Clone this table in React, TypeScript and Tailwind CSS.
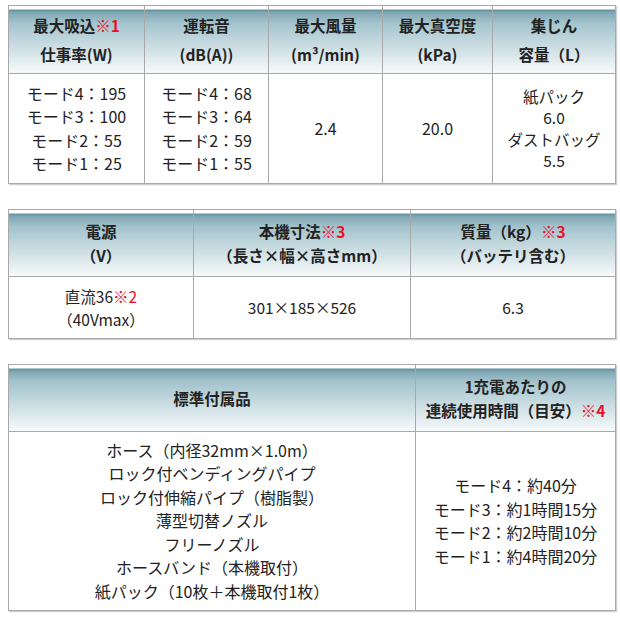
const font = "font-['Noto_Sans_CJK_JP','Noto_Sans',sans-serif]";

const headBg =
  "bg-[linear-gradient(to_bottom,#ffffff_0,#ffffff_3px,#5d8e9b_3px,#7ea7b4_6px,#a3c3cc_16px,#f7fafb_100%)]";
const th = `border border-[#a9a9a9] border-t-0 px-1 text-center align-middle font-bold text-[#222] ${headBg}`;
const td = "border border-[#a9a9a9] px-1 text-center align-middle text-[#222]";

const Note = ({ n }: { n: string }) => (
  <span className="text-[#e8102a]">※{n}</span>
);

const Lines = ({ items }: { items: string[] }) => (
  <>
    {items.map((t) => (
      <div key={t}>{t}</div>
    ))}
  </>
);

export default function App() {
  return (
    <div className={`w-[620px] h-[620px] bg-white pl-2 pt-[5px] ${font}`}>
      {/* 性能 */}
      <table className="w-[607px] table-fixed border-collapse border border-[#a9a9a9] shadow-[1px_1px_1px_#cfcfcf]">
        <colgroup>
          <col className="w-[136px]" />
          <col className="w-[124px]" />
          <col className="w-[114px]" />
          <col className="w-[110px]" />
          <col className="w-[123px]" />
        </colgroup>
        <thead className="text-[15.5px] leading-[29px]">
          <tr className="h-[68px]">
            <th className={th}>
              <div>
                最大吸込<Note n="1" />
              </div>
              <div>仕事率(W)</div>
            </th>
            <th className={th}>
              <div>運転音</div>
              <div>(dB(A))</div>
            </th>
            <th className={th}>
              <div>最大風量</div>
              <div>(m³/min)</div>
            </th>
            <th className={th}>
              <div>最大真空度</div>
              <div>(kPa)</div>
            </th>
            <th className={th}>
              <div>集じん</div>
              <div>容量（L）</div>
            </th>
          </tr>
        </thead>
        <tbody className="text-[16px] leading-[23.5px]">
          <tr className="h-[110px]">
            <td className={td}>
              <Lines items={["モード4：195", "モード3：100", "モード2：55", "モード1：25"]} />
            </td>
            <td className={td}>
              <Lines items={["モード4：68", "モード3：64", "モード2：59", "モード1：55"]} />
            </td>
            <td className={td}>2.4</td>
            <td className={td}>20.0</td>
            <td className={`${td} leading-[21.5px] text-[15.5px]`}>
              <Lines items={["紙パック", "6.0", "ダストバッグ", "5.5"]} />
            </td>
          </tr>
        </tbody>
      </table>

      {/* 電源・寸法 */}
      <table className="mt-[25px] w-[607px] table-fixed border-collapse border border-[#a9a9a9] shadow-[1px_1px_1px_#cfcfcf]">
        <colgroup>
          <col className="w-[185px]" />
          <col className="w-[217px]" />
          <col className="w-[205px]" />
        </colgroup>
        <thead className="text-[15.5px] leading-[24px]">
          <tr className="h-[67px]">
            <th className={th}>
              <div>電源</div>
              <div>（V）</div>
            </th>
            <th className={th}>
              <div>
                本機寸法<Note n="3" />
              </div>
              <div>（長さ×幅×高さmm）</div>
            </th>
            <th className={th}>
              <div>
                質量（kg）<Note n="3" />
              </div>
              <div>（バッテリ含む）</div>
            </th>
          </tr>
        </thead>
        <tbody className="text-[15.5px] leading-[23px]">
          <tr className="h-[62px]">
            <td className={td}>
              <div>
                直流36<Note n="2" />
              </div>
              <div>（40Vmax）</div>
            </td>
            <td className={td}>301×185×526</td>
            <td className={td}>6.3</td>
          </tr>
        </tbody>
      </table>

      {/* 付属品・使用時間 */}
      <table className="mt-[25px] w-[607px] table-fixed border-collapse border border-[#a9a9a9] shadow-[1px_1px_1px_#cfcfcf]">
        <colgroup>
          <col className="w-[407px]" />
          <col className="w-[200px]" />
        </colgroup>
        <thead className="text-[15.5px] leading-[24px]">
          <tr className="h-[67px]">
            <th className={th}>標準付属品</th>
            <th className={th}>
              <div>1充電あたりの</div>
              <div>
                連続使用時間（目安）<Note n="4" />
              </div>
            </th>
          </tr>
        </thead>
        <tbody className="text-[16px] leading-[23.5px]">
          <tr className="h-[179px]">
            <td className={td}>
              <Lines
                items={[
                  "ホース（内径32mm×1.0m）",
                  "ロック付ベンディングパイプ",
                  "ロック付伸縮パイプ（樹脂製）",
                  "薄型切替ノズル",
                  "フリーノズル",
                  "ホースバンド（本機取付）",
                  "紙パック（10枚＋本機取付1枚）",
                ]}
              />
            </td>
            <td className={td}>
              <Lines items={["モード4：約40分", "モード3：約1時間15分", "モード2：約2時間10分", "モード1：約4時間20分"]} />
            </td>
          </tr>
        </tbody>
      </table>
    </div>
  );
}
